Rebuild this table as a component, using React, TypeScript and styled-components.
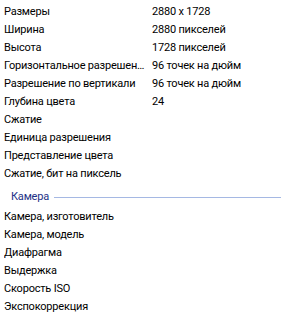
import React from 'react';
import styled, { createGlobalStyle } from 'styled-components';

type Prop = {
  name: string,
  value?: string
}

const imageProps: Prop[] = [
  { name: 'Размеры', value: '2880 x 1728' },
  { name: 'Ширина', value: '2880 пикселей' },
  { name: 'Высота', value: '1728 пикселей' },
  { name: 'Горизонтальное разрешение', value: '96 точек на дюйм' },
  { name: 'Разрешение по вертикали', value: '96 точек на дюйм' },
  { name: 'Глубина цвета', value: '24' },
  { name: 'Сжатие' },
  { name: 'Единица разрешения' },
  { name: 'Представление цвета' },
  { name: 'Сжатие, бит на пиксель' },
]

const cameraProps: Prop[] = [
  { name: 'Камера, изготовитель' },
  { name: 'Камера, модель' },
  { name: 'Диафрагма' },
  { name: 'Выдержка' },
  { name: 'Скорость ISO' },
  { name: 'Экспокоррекция' },
]

const GlobalStyle = createGlobalStyle`
  html, body {
    margin: 0;
    padding: 0;
    background: #ffffff;
  }
`

const List = styled.div`
  display: flex;
  flex-direction: column;
  width: 282px;
  height: 312px;
  overflow: hidden;
  padding-top: 3px;
  box-sizing: border-box;
  font-family: Roboto, 'Liberation Sans', Arial, sans-serif;
  font-size: 11px;
  letter-spacing: -0.2px;
  color: #000000;
`

const Row = styled.div`
  display: grid;
  grid-template-columns: 148px 1fr;
  height: 18px;
  flex-shrink: 0;
  line-height: 18px;
  padding-left: 4px;
`

const Name = styled.span`
  white-space: nowrap;
  overflow: hidden;
  text-overflow: ellipsis;
  padding-right: 5px;
`

const Value = styled.span`
  white-space: nowrap;
`

const Group = styled.div`
  display: flex;
  align-items: center;
  flex-shrink: 0;
  gap: 5px;
  height: 25px;
  padding: 3px 1px 0 11px;
  box-sizing: border-box;
  color: #1e3287;
  line-height: 18px;
`

const Rule = styled.div`
  flex: 1;
  height: 1px;
  background: #a5b8e3;
`

function PropRow({ name, value }: Prop) {
  return (
    <Row>
      <Name>{name}</Name>
      <Value>{value}</Value>
    </Row>
  );
}

function App() {
  return (
    <>
      <GlobalStyle />
      <List>
        {imageProps.map(p => <PropRow key={p.name} {...p} />)}
        <Group>
          Камера
          <Rule />
        </Group>
        {cameraProps.map(p => <PropRow key={p.name} {...p} />)}
      </List>
    </>
  );
}

export default App;
